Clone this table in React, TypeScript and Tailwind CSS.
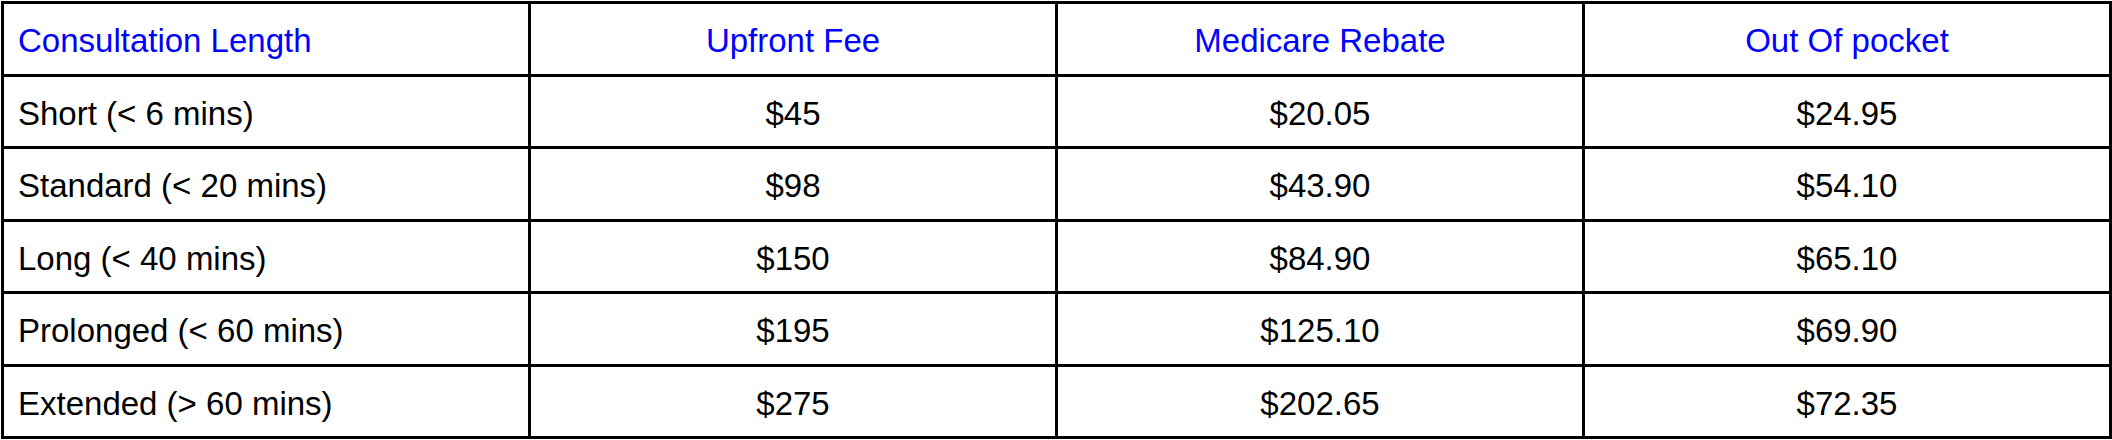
const headers = ["Consultation Length", "Upfront Fee", "Medicare Rebate", "Out Of pocket"];

const rows = [
  ["Short (< 6 mins)", "$45", "$20.05", "$24.95"],
  ["Standard (< 20 mins)", "$98", "$43.90", "$54.10"],
  ["Long (< 40 mins)", "$150", "$84.90", "$65.10"],
  ["Prolonged (< 60 mins)", "$195", "$125.10", "$69.90"],
  ["Extended (> 60 mins)", "$275", "$202.65", "$72.35"],
];

function Cell({ text, first, head }: { text: string; first: boolean; head?: boolean }) {
  return (
    <div
      className={`flex items-center border-r-[3px] border-b-[3px] border-black px-[14px] pt-[4px] ${
        first ? "justify-start" : "justify-center"
      } ${head ? "text-[#0000ff]" : "text-black"}`}
    >
      {text}
    </div>
  );
}

export default function App() {
  return (
    <div className="h-[440px] w-[2112px] bg-white pl-[1px] pt-[1px]">
      <div
        className="grid h-[438px] w-[2111px] grid-cols-4 grid-rows-6 border-l-[3px] border-t-[3px] border-black text-[33px] leading-none"
        style={{ fontFamily: '"Liberation Sans", Arial, sans-serif' }}
      >
        {headers.map((h, i) => (
          <Cell key={h} text={h} first={i === 0} head />
        ))}
        {rows.map((r) =>
          r.map((c, i) => <Cell key={r[0] + i} text={c} first={i === 0} />)
        )}
      </div>
    </div>
  );
}
